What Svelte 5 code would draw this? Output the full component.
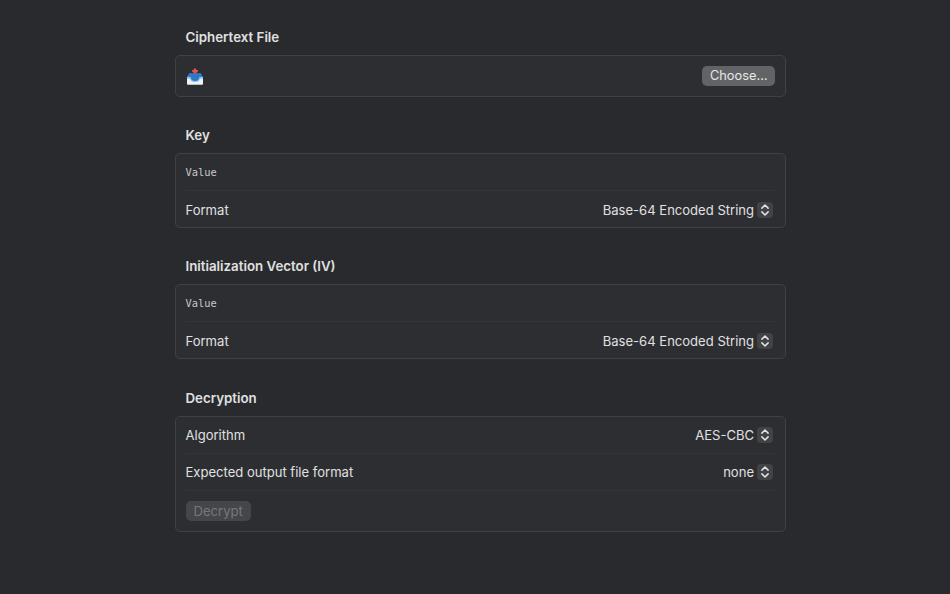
<script>
  const pickerFormat = 'Base-64 Encoded String';

  const sections = [
    {
      title: 'Ciphertext File',
      rows: [{ type: 'file', button: 'Choose…' }],
    },
    {
      title: 'Key',
      rows: [
        { type: 'field', placeholder: 'Value' },
        { type: 'picker', label: 'Format', value: pickerFormat, low: true },
      ],
    },
    {
      title: 'Initialization Vector (IV)',
      rows: [
        { type: 'field', placeholder: 'Value' },
        { type: 'picker', label: 'Format', value: pickerFormat, low: true },
      ],
    },
    {
      title: 'Decryption',
      rows: [
        { type: 'picker', label: 'Algorithm', value: 'AES-CBC' },
        { type: 'picker', label: 'Expected output file format', value: 'none' },
        { type: 'action', button: 'Decrypt' },
      ],
    },
  ];
</script>

<main>
  {#each sections as section}
    <section>
      <h2>{section.title}</h2>
      <div class="card">
        {#each section.rows as row}
          <div class="row {row.type}" class:low={row.low}>
            {#if row.type === 'file'}
              <svg class="tray" width="18" height="18" viewBox="0 0 18 18">
                <path d="M3.2 5.2h11.6L17 9.4v2H1v-2z" fill="#3b82cf" />
                <path d="M1 9.2h16V16a.8.8 0 0 1-.8.8H1.8A.8.8 0 0 1 1 16z" fill="#edf2f6" />
                <path d="M1 8.8h16v2h-3c-.5 2.2-2 3.2-5 3.2s-4.500-1-5-3.200H1z" fill="#8fc3ef" />
                <path d="M3.400 6.200h11.200l1 2.800h-2.200c-.4 2.600-1.700 3.900-4.400 3.900S5 11.600 4.600 9H2.400z" fill="#2f78c6" />
                <path d="M7.800.4h2.400v1.500h1.700v1.500L9.500 5.500h-1L6.100 3.400V1.900h1.700z" fill="#e4534c" />
              </svg>
              <button>{row.button}</button>
            {:else if row.type === 'field'}
              <span class="placeholder">{row.placeholder}</span>
            {:else if row.type === 'picker'}
              <span>{row.label}</span>
              <div class="picker">
                <span>{row.value}</span>
                <span class="stepper">
                  <svg width="16" height="16" viewBox="0 0 16 16" fill="none" stroke="#e4e4e5" stroke-width="1.5" stroke-linecap="round" stroke-linejoin="round">
                    <path d="M4.900 6.100L8 3l3.100 3.100" />
                    <path d="M4.900 9.900L8 13l3.100-3.100" />
                  </svg>
                </span>
              </div>
            {:else}
              <button disabled>{row.button}</button>
            {/if}
          </div>
        {/each}
      </div>
    </section>
  {/each}
</main>

<style>
  :global(body) {
    background: #292a2d;
  }

  main {
    box-sizing: border-box;
    width: 611px;
    height: 594px;
    margin-left: 175px;
    padding-top: 27px;
    color: #e0e0e1;
    font: 13.15px/20px Inter, sans-serif;
  }

  section {
    margin-bottom: 28px;
  }

  section:last-child {
    margin-top: 29px;
  }

  h2 {
    height: 28px;
    margin: 0 0 0 10.5px;
    font-size: 13.3px;
    font-weight: 600;
    line-height: 21px;
  }

  .card {
    padding: 0 10px 0 9.5px;
    border: 1px solid #404144;
    border-radius: 5px;
    background: #2d2e31;
  }

  .row {
    display: flex;
    box-sizing: content-box;
    height: 36px;
    align-items: center;
    justify-content: space-between;
  }

  .row + .row {
    border-top: 1px solid #343538;
  }

  .row.file,
  .row.action {
    height: 40px;
  }

  .low > * {
    margin-top: 1px;
  }

  .tray {
    margin-top: 1px;
  }

  .placeholder {
    color: #c8c8ca;
    font-family: 'DejaVu Sans Mono', monospace;
    font-size: 10.4px;
  }

  .picker {
    display: flex;
    align-items: center;
    gap: 3px;
    margin-right: 1px;
    font-size: 13.05px;
  }

  .stepper {
    display: flex;
    width: 16px;
    height: 16px;
    border-radius: 4px;
    background: #424346;
  }

  button {
    height: 20px;
    padding: 0 7.5px;
    border: none;
    border-radius: 5px;
    background: #626366;
    color: #e8e8e9;
    font: inherit;
    font-size: 12.8px;
  }

  button:disabled {
    padding: 0 8px;
    background: #454649;
    color: #76777a;
    font-size: 13.1px;
  }
</style>
